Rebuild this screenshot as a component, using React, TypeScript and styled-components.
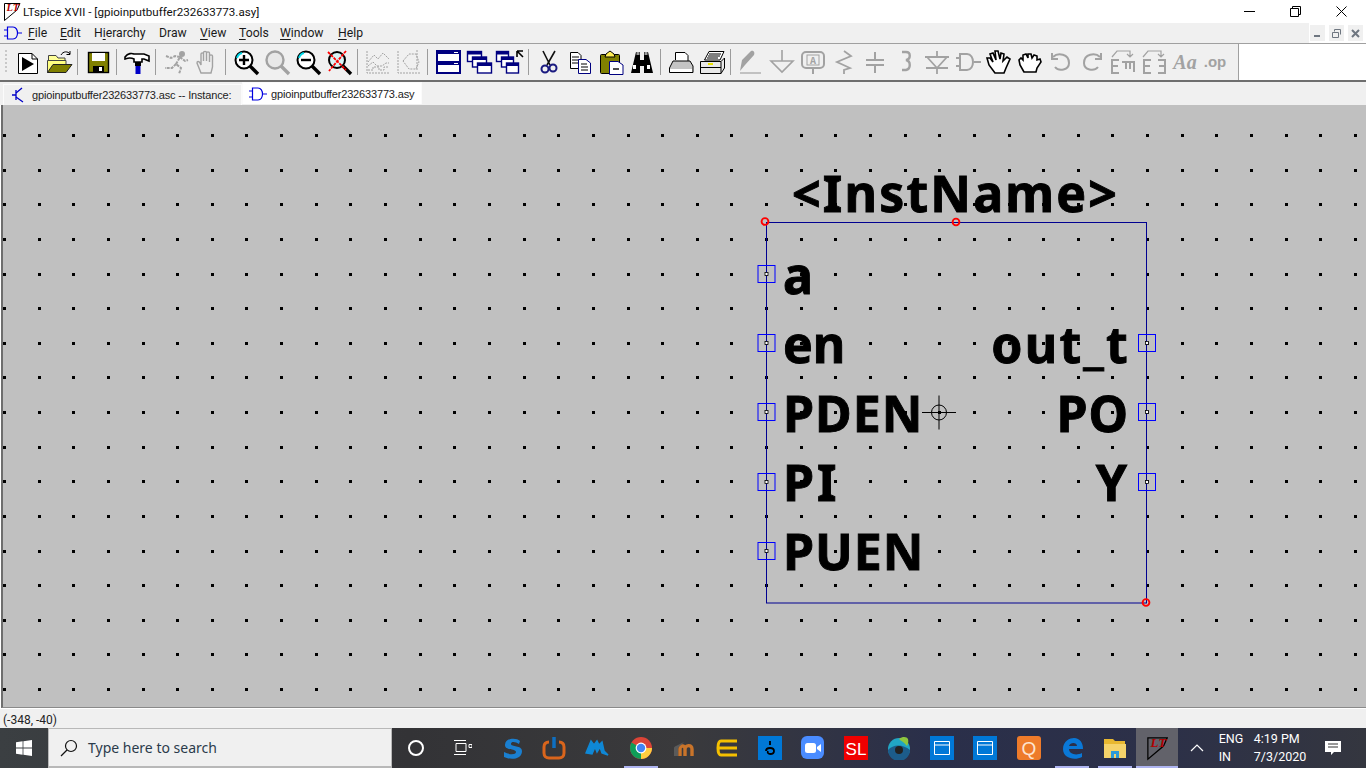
import React from "react";
import styled, { createGlobalStyle } from "styled-components";

const Global = createGlobalStyle`
  html, body { margin: 0; padding: 0; background: #fff; overflow: hidden; }
  * { box-sizing: border-box; }
`;
const UI = `Roboto, "Noto Sans", sans-serif`;

const Shell = styled.div`
  width: 1366px; height: 768px; display: flex; flex-direction: column; font-family: ${UI}; color: #000; overflow: hidden;
`;
const TitleBar = styled.div`
  height: 23px; flex: none; background: #fff; display: flex; align-items: center; padding: 0 2px 0 3px; font-size: 11.6px;
`;
const TitleText = styled.span`
  margin-left: 2px; flex: 1; white-space: nowrap; color: #111;
`;
const WinBtn = styled.div`
  width: 46px; height: 23px; display: flex; align-items: center; justify-content: center;
`;
const MenuBar = styled.div`
  height: 21px; flex: none; background: #f0f0f0; border-bottom: 1px solid #a0a0a0; display: flex; align-items: center; padding-left: 4px; position: relative;
`;
const MenuItem = styled.span<{ $w: number }>`
  width: ${p => p.$w}px; font-size: 12.2px; white-space: nowrap; color: #1a1a1a; display: flex; align-items: center;
  u { text-underline-offset: 2px; }
`;
const MdiBox = styled.div`
  margin-left: auto; align-self: stretch; width: 57px; background: #fff; display: flex; gap: 2px; padding: 1px 1px 0 0;
`;
const MdiBtn = styled.div`
  width: 17px; height: 18px; background: #f0f0f0; border: 1px solid #fff; display: flex; align-items: center; justify-content: center;
`;
const ToolRow = styled.div`
  height: 38px; flex: none; display: flex; background: #fff; border-bottom: 2px solid #6e6e6e;
`;
const Toolbar = styled.div`
  width: 1239px; background: #f0f0f0; border-right: 1px solid #a0a0a0; display: flex; align-items: center; padding-left: 12px; position: relative;
  &::before { content: ""; position: absolute; left: 5px; top: 6px; bottom: 6px; width: 2px;
    background: repeating-linear-gradient(to bottom, #c8c8c8 0 2px, transparent 2px 4px); }
`;
const ToolBtn = styled.div`
  width: 31px; height: 28px; flex: none; display: flex; align-items: center; justify-content: center;
  svg { display: block; overflow: visible; }
`;
const Sep = styled.div`
  width: 8px; height: 26px; flex: none; position: relative;
  &::after { content: ""; position: absolute; left: 3px; top: 0; bottom: 0; width: 1px; background: #9c9c9c; }
`;
const TabBar = styled.div`
  height: 23px; flex: none; background: #f0f0f0; display: flex; align-items: flex-end; padding-left: 3px; font-family: "Liberation Sans", Arial, sans-serif; font-size: 11px; letter-spacing: -0.16px;
`;
const Tab = styled.div<{ $active?: boolean; $w: number }>`
  width: ${p => p.$w}px; height: ${p => (p.$active ? 22 : 21)}px; background: ${p => (p.$active ? "#fff" : "#f0f0f0")};
  border: 1px solid #fbfbfb; border-bottom: none; display: flex; align-items: center; padding-left: ${p => (p.$active ? 6 : 8)}px; gap: ${p => (p.$active ? 4 : 8)}px; white-space: nowrap; color: #222;
  position: relative; top: ${p => (p.$active ? -1 : 0)}px;
`;
const Canvas = styled.div`
  height: 603px; flex: none; background: #c0c0c0; position: relative; border-left: 2px solid #6e6e6e; border-bottom: 1px solid #8a8a8a; margin-left: 1px;
  svg { position: absolute; left: -3px; top: 0; }
`;
const Label = styled.span<{ $x?: number; $right?: number; $base: number; $sp?: number }>`
  position: absolute; font: 700 50px/50px "Noto Sans", "Open Sans", sans-serif; color: #000; white-space: nowrap;
  -webkit-text-stroke: 0.9px #000;
  top: ${p => p.$base - 105 - 44}px;
  ${p => (p.$x !== undefined ? `left: ${p.$x - 3}px;` : `right: ${1366 - (p.$right as number)}px;`)}
  letter-spacing: ${p => p.$sp ?? 0}px;
`;
const StatusBar = styled.div`
  height: 20px; flex: none; background: #f0f0f0; border-top: 1px solid #fff; display: flex; align-items: center; padding: 3px 0 0 3px; font-size: 12px; color: #222;
`;
const Taskbar = styled.div`
  height: 40px; flex: none; display: flex; align-items: stretch; color: #fff;
  background: linear-gradient(to right, #3b3f42 0%, #333336 30%, #3a3a3c 50%, #2a2f4a 68%, #2c3048 85%, #34363f 100%);
`;
const StartBtn = styled.div`
  width: 48px; display: flex; align-items: center; justify-content: center;
`;
const SearchBox = styled.div`
  width: 344px; background: #f0f0f0; border: 1px solid #b8b8b8; border-bottom-width: 2px; display: flex; align-items: center; padding-left: 11px; gap: 10px;
  font-family: "Noto Sans", sans-serif; font-size: 14px; color: #2b3b4b;
`;
const TaskIcon = styled.div<{ $w: number; $on?: boolean; $under?: number }>`
  width: ${p => p.$w}px; flex: none; display: flex; align-items: center; justify-content: center; position: relative;
  background: ${p => (p.$on ? "#62626a" : "transparent")};
  ${p => p.$under ? `&::after { content: ""; position: absolute; left: ${(p.$w - p.$under) / 2}px; width: ${p.$under}px; bottom: 0; height: 2px; background: #aeb4f0; }` : ""}
`;
const TaskGap = styled.div`
  width: 6px; flex: none;
`;
const Tray = styled.div`
  display: flex; flex-direction: column; align-items: center; justify-content: center; font-size: 12.5px; line-height: 18px; flex: none; white-space: nowrap;
`;

const G = "#a2a2a2";
type S = { w?: number; children: React.ReactNode };
const Ico = ({ children, w = 28 }: S) => <svg width={w} height={28} viewBox={`0 0 ${w} 28`}>{children}</svg>;

const icons: Record<string, React.ReactNode> = {
  run: <Ico><path d="M4.5 5.5H18L23.5 11V25.5H4.5Z" fill="#fff" stroke="#000" /><path d="M18 5.5V11H23.5" fill="none" stroke="#000" /><path d="M8 9L20 16L8 23Z" fill="#000" /></Ico>,
  open: <Ico><path d="M3.5 12V7.5H11L13 10H20V13" fill="#ffff99" stroke="#444" /><path d="M2.5 24.5V12.5H21V22Z" fill="#ffff80" stroke="#444" /><path d="M2.5 24.5L8 16.5H27L21 24.5Z" fill="#808000" stroke="#222" /><path d="M16 7C18 3 23 3 25 6M25 3V6.5H21.5" fill="none" stroke="#000" /></Ico>,
  save: <Ico><rect x="4.5" y="4.5" width="20" height="20" fill="#808000" stroke="#000" strokeWidth="1.4" /><rect x="8" y="5" width="13" height="8" fill="#fff" /><rect x="9" y="18" width="11" height="6" fill="#000" /><rect x="15" y="19" width="3" height="4" fill="#fff" /></Ico>,
  hammer: <Ico><path d="M2 9C5 5 9 5 11 6H21L26 8V13L21 11H19V14H11V11C7 9 5 10 2 11Z" fill="#fff" stroke="#000" strokeWidth="1.6" /><rect x="12" y="14" width="6" height="4" fill="#000" /><rect x="12.5" y="18" width="5" height="8" fill="#0000c8" /></Ico>,
  man: <Ico><g fill="none" stroke={G} strokeWidth="2"><circle cx="20" cy="6" r="2" fill={G} /><path d="M4 8L9 10L13 8L18 9L14 16L19 20L17 26M14 16L10 20L3 20M18 9L23 13L26 12" strokeDasharray="3 1" /></g></Ico>,
  hand: <Ico><path d="M8 25L4 15C4 13 6 13 7 15L8 17V6C8 4.5 10.5 4.5 10.5 6V13V4.5C10.5 3 13.5 3 13.5 4.5V13V5C13.5 3.5 16.5 3.5 16.5 5V14V8C16.5 6.5 19.5 6.5 19.5 8V19L18 25Z" fill="#eee" stroke={G} strokeWidth="1.4" /></Ico>,
  zin: <Ico><circle cx="12" cy="12" r="8.5" fill="#fff" stroke="#000" strokeWidth="2" /><path d="M5 10A7 7 0 0 1 10 5" stroke="#00d8e8" fill="none" strokeWidth="2" /><path d="M7 12H17M12 7V17" stroke="#000" strokeWidth="2.4" /><path d="M18 18L26 26" stroke="#000" strokeWidth="3.4" /></Ico>,
  zfit: <Ico><circle cx="12" cy="12" r="8.5" fill="#e8e8e8" stroke={G} strokeWidth="2.4" /><path d="M18 18L26 26" stroke={G} strokeWidth="3.4" /></Ico>,
  zout: <Ico><circle cx="12" cy="12" r="8.5" fill="#fff" stroke="#000" strokeWidth="2" /><path d="M5 10A7 7 0 0 1 10 5" stroke="#00d8e8" fill="none" strokeWidth="2" /><path d="M7 12H17" stroke="#000" strokeWidth="2.4" /><path d="M18 18L26 26" stroke="#000" strokeWidth="3.4" /></Ico>,
  zx: <Ico><circle cx="12" cy="12" r="8" fill="#d8f4f6" stroke="#000" strokeWidth="2" /><path d="M18 18L26 26" stroke="#000" strokeWidth="3.4" /><path d="M3 4L21 22M21 3L4 23" stroke="#f00" strokeWidth="1.8" strokeDasharray="3 1" /></Ico>,
  chart: <Ico><g fill="none" stroke={G} strokeDasharray="2 1"><path d="M3 3V25H26" /><path d="M4 14L10 7L14 11L19 5L25 11" /><path d="M4 18L9 14L13 18H18L22 15H25" /><path d="M4 22H9V19H15V22H20V19H25" /></g></Ico>,
  fft: <Ico><g fill="none" stroke={G} strokeDasharray="2 1"><path d="M3 3V25H26" /><path d="M8 13L14 6H21L24 14L21 21H14Z" /><path d="M22 2V22" /></g></Ico>,
  tile: <Ico><g stroke="#000080" strokeWidth="2" fill="#fff"><rect x="3" y="3" width="23" height="11" /><rect x="3" y="14" width="23" height="11" /></g><rect x="3" y="3" width="23" height="3" fill="#000080" /><rect x="3" y="14" width="23" height="3" fill="#000080" /><rect x="20" y="4" width="4" height="1" fill="#fff" /><rect x="20" y="15" width="4" height="1" fill="#fff" /></Ico>,
  casc: <Ico><g stroke="#000080" strokeWidth="1.4" fill="#fff"><rect x="2.5" y="3.5" width="14" height="10" /><rect x="7.5" y="9" width="14" height="10" /><rect x="12.5" y="15" width="14" height="10" /></g><g fill="#000080"><rect x="2.5" y="3.5" width="14" height="3" /><rect x="7.5" y="9" width="14" height="3" /><rect x="12.5" y="15" width="14" height="3" /></g></Ico>,
  arr: <Ico><g stroke="#000080" strokeWidth="1.4" fill="#fff"><rect x="0.5" y="3.5" width="12" height="10" /><rect x="5.5" y="9" width="12" height="10" /><rect x="10.5" y="15" width="12" height="10" /></g><g fill="#000080"><rect x="0.5" y="3.5" width="12" height="3" /><rect x="5.5" y="9" width="12" height="3" /><rect x="10.5" y="15" width="12" height="3" /></g><path d="M21 3V9M21 3H27M21 3L27 9" stroke="#000" strokeWidth="1.6" fill="none" /></Ico>,
  cut: <Ico><path d="M8 3L15 17M20 3L12 17" stroke="#111" strokeWidth="1.6" fill="none" /><circle cx="10" cy="21" r="3.5" fill="none" stroke="#1a1a80" strokeWidth="2" /><circle cx="18" cy="20" r="3.5" fill="none" stroke="#1a1a80" strokeWidth="2" /></Ico>,
  copy: <Ico><path d="M4.5 4.5H12L15 7.5V20.5H4.5Z" fill="#fff" stroke="#000" /><path d="M6 9H13M6 12H13M6 15H13" stroke="#000" /><path d="M12.5 11.5H20L24.5 15V25.5H12.5Z" fill="#fff" stroke="#000080" /><path d="M15 16H21M15 19H22M15 22H22" stroke="#000" /></Ico>,
  paste: <Ico><rect x="3.5" y="6.5" width="19" height="19" rx="1" fill="#808000" stroke="#000" /><path d="M9 6L13 3L17 6L18 9H8Z" fill="#ffee55" stroke="#000" /><path d="M12.5 13.5H21L26 17V26.5H12.5Z" fill="#fff" stroke="#000080" /><path d="M16 21H22" stroke="#000" strokeWidth="1.4" /></Ico>,
  bino: <Ico><path d="M8 4H12V12H16V4H20L25 25H16V18H12V25H3Z" fill="#000" /><rect x="8.5" y="4" width="3" height="3" fill="#9a9a9a" /><rect x="16.5" y="4" width="3" height="3" fill="#9a9a9a" /><rect x="5" y="17" width="3" height="4" fill="#fff" /><rect x="19" y="17" width="3" height="4" fill="#fff" /></Ico>,
  prn: <Ico><path d="M8.5 12V4.5H18L21 7.5V14" fill="#fff" stroke="#000" /><path d="M2.5 20L6 13H23L26 18V24.5H2.5Z" fill="#c4c4c4" stroke="#000" /><rect x="3" y="21" width="22" height="3" fill="#fff" /></Ico>,
  prn2: <Ico><path d="M6.5 12L11 3.5H26L22 12Z" fill="#fff" stroke="#000" /><path d="M11 6H23M10 8H22M9 10H20" stroke="#000" /><path d="M2.5 13.5H23L26.5 10V20L23 25.5H2.5Z" fill="#e8e8e8" stroke="#000" /><path d="M2.5 19.5H23M23 13.5V25.5" stroke="#000" /><rect x="10" y="15" width="5" height="2" fill="#e8e000" /></Ico>,
  pen: <Ico><path d="M3 23L5 12L14 3C17 2 18 5 17 7L8 17Z" fill={G} /><path d="M3 25H24" stroke={G} strokeWidth="1.2" /></Ico>,
  gnd: <Ico><path d="M14 2V13M3 13H25L14 24Z" fill="none" stroke={G} strokeWidth="1.6" /></Ico>,
  lbl: <Ico><path d="M14 20V26" stroke={G} strokeWidth="2" /><rect x="3" y="4" width="22" height="16" rx="4" fill="none" stroke={G} strokeWidth="2" /><rect x="8" y="7" width="12" height="10" fill="none" stroke={G} /><text x="14" y="16" textAnchor="middle" fontSize="10" fontWeight="700" fontFamily="Liberation Mono, monospace" fill={G}>A</text></Ico>,
  res: <Ico><path d="M14 3L21 8L7 14L20 20L14 22V26" fill="none" stroke={G} strokeWidth="1.8" /></Ico>,
  cap: <Ico><path d="M14 4V12M5 12H23M5 17H23M14 17V25" fill="none" stroke={G} strokeWidth="2" /></Ico>,
  ind: <Ico><path d="M10 4H14C19 4 19 11 14 12C19 13 19 21 14 22H10" fill="none" stroke={G} strokeWidth="2.4" /></Ico>,
  dio: <Ico><path d="M14 3V9M2 9H26M3 20H25M14 20V26M4 9L14 20L24 9" fill="none" stroke={G} strokeWidth="1.8" /></Ico>,
  comp: <Ico><path d="M2 10H7M2 18H7M6 6V22H13C21 22 21 6 13 6ZM20 14H27" fill="none" stroke={G} strokeWidth="2" /></Ico>,
  hand1: <Ico><path d="M10 25L4 17L2 10L5 10L8 14L5 6L8 5L11 12L10 3L13 3L15 11L16 5L19 6L18 13L22 9L25 11L21 20L19 25Z" fill="#fff" stroke="#000" strokeWidth="1.6" /></Ico>,
  hand2: <Ico><path d="M8 24L4 17L3 12L5 10L7 12V7L10 6L12 10V6L15 6L16 10L18 7L21 8V12L24 11L25 14L21 20L20 24Z" fill="#fff" stroke="#000" strokeWidth="1.6" /></Ico>,
  undo: <Ico><path d="M6 9C11 4 22 6 22 15C22 22 12 24 8 19" fill="none" stroke={G} strokeWidth="2" /><path d="M5 5V11H11" fill="none" stroke={G} strokeWidth="2" /></Ico>,
  redo: <Ico><path d="M22 9C17 4 6 6 6 15C6 22 16 24 20 19" fill="none" stroke={G} strokeWidth="2" /><path d="M23 5V11H17" fill="none" stroke={G} strokeWidth="2" /></Ico>,
  rot: <Ico><path d="M3 9L8 3H21V8M18 6L21 9L24 6" fill="none" stroke={G} strokeWidth="1.2" /><path d="M10 12H3V25H10M3 18H9M13 14H25V24M17 14V21M21 14V21" fill="none" stroke={G} strokeWidth="2" /></Ico>,
  mir: <Ico><path d="M3 9L8 3H21V8M18 6L21 9L24 6" fill="none" stroke={G} strokeWidth="1.2" /><path d="M11 12H4V25H11M4 18H10M18 12H25V25H18M19 18H25" fill="none" stroke={G} strokeWidth="2" /></Ico>,
  text: <Ico><text x="14" y="21" textAnchor="middle" fontSize="20" fontWeight="700" fontStyle="italic" fontFamily="Liberation Serif, serif" fill={G}>Aa</text></Ico>,
  op: <Ico><text x="13" y="19" textAnchor="middle" fontSize="15" fontWeight="700" fontFamily="Liberation Sans, sans-serif" fill={G}>.op</text></Ico>,
};

const groups = [
  ["run", "open"], ["save"], ["hammer"], ["man", "hand"], ["zin", "zfit", "zout", "zx"], ["chart", "fft"], ["tile", "casc", "arr"],
  ["cut", "copy", "paste", "bino"], ["prn", "prn2"],
  ["pen", "gnd", "lbl", "res", "cap", "ind", "dio", "comp", "hand1", "hand2", "undo", "redo", "rot", "mir", "text", "op"],
];

const Logo = ({ s = 1 }: { s?: number }) => (
  <svg width={18 * s} height={20 * s} viewBox="0 0 18 20">
    <path d="M1.5 1.5H17L14 8L1.5 18.5Z" fill="none" stroke="#000" strokeWidth="1" />
    <text x="3.5" y="9" fontSize="10.5" fontWeight="700" fontStyle="italic" fontFamily="Liberation Serif, serif" fill="#b00000">LT</text>
  </svg>
);

const Comp = ({ c = "#0000e0" }: { c?: string }) => (
  <svg width="18" height="14" viewBox="0 0 18 14"><path d="M0 4H4M0 10H4M3.5 1V13H9C15 13 15 1 9 1H3.5ZM13 7H18" fill="none" stroke={c} strokeWidth="1.2" /></svg>
);

const dots: [number, number][] = [];
for (let i = 0; i < 40; i++) for (let j = 0; j < 17; j++) dots.push([Math.round(4 + 34.64 * i), Math.round(30 + 34.63 * j)]);

const leftPins = [274, 343, 412, 482, 551];
const rightPins = [343, 412, 482];

const Schematic = () => (
  <svg width="1366" height="603" viewBox="0 0 1366 603">
    {dots.map(([x, y]) => <rect key={`${x}-${y}`} x={x - 1} y={y - 1} width="3" height="3" fill="#000" />)}
    <rect x="766.5" y="117.5" width="380" height="380.5" fill="none" stroke="#000090" />
    {leftPins.map(y => <g key={y}><rect x="758" y={y - 105 - 8.5} width="17" height="17" fill="none" stroke="#0000ff" /><rect x="765" y={y - 105 - 1.5} width="3" height="3" fill="#fff" stroke="#000" strokeWidth="0.8" /></g>)}
    {rightPins.map(y => <g key={y}><rect x="1138.5" y={y - 105 - 8.5} width="17" height="17" fill="none" stroke="#0000ff" /><rect x="1145.5" y={y - 105 - 1.5} width="3" height="3" fill="#fff" stroke="#000" strokeWidth="0.8" /></g>)}
    {[[765, 116.5], [956, 117], [1146, 497.5]].map(([x, y]) => <circle key={x} cx={x} cy={y} r="3.4" fill="none" stroke="#f00" strokeWidth="1.9" />)}
    <g fill="none" stroke="#000"><circle cx="939" cy="307.5" r="7.5" /><path d="M922 307.5H956M939 290.5V324.5" /></g>
  </svg>
);

const Win = () => (
  <svg width="16" height="16" viewBox="0 0 16 16" fill="#fff"><path d="M0 2.2L6.6 1.3V7.6H0ZM7.4 1.2L16 0V7.6H7.4ZM0 8.4H6.6V14.7L0 13.8ZM7.4 8.4H16V16L7.4 14.8Z" /></svg>
);
const Square = ({ bg, children }: { bg: string; children: React.ReactNode }) => (
  <svg width="24" height="24" viewBox="0 0 24 24"><rect width="24" height="24" fill={bg} />{children}</svg>
);
const WindowGlyph = () => <Square bg="#0078d7"><path d="M4.5 5.5H19.5V18.5H4.5ZM4.5 9H19.5" fill="none" stroke="#fff" /></Square>;

const taskIcons: { w: number; under?: number; on?: boolean; el: React.ReactNode }[] = [
  { w: 40, el: <svg width="24" height="24" viewBox="0 0 24 24"><path d="M20 5C16 1 5 2 5 9C5 15 16 12 16 16C16 19 9 19 4 16L4 21C10 24 22 24 22 15C22 9 11 11 11 8C11 5 16 6 19 8Z" fill="#1a7fd0" /></svg> },
  { w: 43, el: <svg width="24" height="24" viewBox="0 0 24 24"><path d="M7 6C3 6 2 8 2 11V17C2 20 4 22 7 22H17C20 22 22 20 22 17V11C22 8 21 6 17 6" fill="none" stroke="#d9651c" strokeWidth="3" /><path d="M12 1V12" stroke="#0f6fc0" strokeWidth="3.5" /></svg> },
  { w: 44, el: <svg width="24" height="24" viewBox="0 0 24 24"><path d="M1 17L6 5L9 9L12 5L14 9L17 6L19 15L23 19L17 17L15 11L12 16L10 11L7 18Z" fill="#0f88d6" stroke="#0f88d6" strokeWidth="1.5" /></svg> },
  { w: 43, under: 34, el: <svg width="24" height="24" viewBox="0 0 24 24"><circle cx="12" cy="12" r="11" fill="#db4437" /><path d="M12 12L2.5 6.5A11 11 0 0 0 12 23Z" fill="#0f9d58" /><path d="M12 12H23A11 11 0 0 1 12 23Z" fill="#ffcd40" /><circle cx="12" cy="12" r="5.4" fill="#fff" /><circle cx="12" cy="12" r="4.2" fill="#4285f4" /></svg> },
  { w: 43, el: <svg width="24" height="24" viewBox="0 0 24 24"><path d="M8 20V13C8 9 13 9 13 13V20M13 13C13 9 20 8 20 13V20" fill="none" stroke="#c9742a" strokeWidth="3.4" /><path d="M2 20V12C2 11 3 10 4 10L12 6L6 12V20" fill="#5a5a5a" /></svg> },
  { w: 44, el: <svg width="24" height="24" viewBox="0 0 24 24"><path d="M22 5H6C2 5 2 19 6 19H22M3 12H22" fill="none" stroke="#f5c000" strokeWidth="3" /></svg> },
  { w: 42, el: <Square bg="#0078d7"><path d="M12 5V9M8 15C8 11 16 11 16 15C16 19 8 19 10 15" fill="none" stroke="#000" strokeWidth="1.8" /></Square> },
  { w: 43, el: <svg width="24" height="24" viewBox="0 0 24 24"><rect width="23" height="23" rx="6" fill="#4a8cff" /><rect x="4" y="7" width="11" height="10" rx="2.5" fill="#fff" /><path d="M16 11L20 8V16L16 13Z" fill="#fff" /></svg> },
  { w: 43, el: <Square bg="#f00000"><text x="12" y="19" textAnchor="middle" fontSize="17" fontFamily="Liberation Sans, sans-serif" fill="#fff">SL</text></Square> },
  { w: 43, el: <svg width="24" height="24" viewBox="0 0 24 24"><circle cx="12" cy="13" r="11" fill="#21a6c4" /><path d="M1 14C6 8 16 8 23 14A11 11 0 0 1 1 14Z" fill="#1c5c8a" /><circle cx="12" cy="14" r="4" fill="#222" /><path d="M12 3C16 0 20 1 21 3C22 7 20 10 20 10C17 6 14 5 12 3Z" fill="#8dc63f" /></svg> },
  { w: 43, el: <WindowGlyph /> },
  { w: 44, el: <WindowGlyph /> },
  { w: 43, el: <svg width="24" height="24" viewBox="0 0 24 24"><rect width="24" height="24" rx="3" fill="#ee7b2a" /><text x="12" y="19" textAnchor="middle" fontSize="19" fontFamily="Liberation Sans, sans-serif" fill="#fde3d0">Q</text></svg> },
  { w: 43, under: 34, el: <svg width="24" height="24" viewBox="0 0 24 24"><path d="M3 13C3 5 10 2 14 2C20 2 23 7 23 13H9C9 18 16 20 22 17V21C14 25 3 22 3 13ZM9 10H17C17 6 10 6 9 10Z" fill="#0a78d7" /></svg> },
  { w: 43, under: 34, el: <svg width="24" height="24" viewBox="0 0 24 24"><path d="M1 3H10L12 5H22V21H1Z" fill="#e8b830" /><path d="M1 8H23V22H1Z" fill="#f5d36a" /><path d="M8 22V15H16V22H13V18H11V22Z" fill="#2e9ad8" /></svg> },
  { w: 42, on: true, under: 42, el: <Logo s={1.25} /> },
];

const App = () => (
  <Shell>
    <Global />
    <TitleBar>
      <Logo />
      <TitleText>LTspice XVII - [gpioinputbuffer232633773.asy]</TitleText>
      <WinBtn><svg width="11" height="2"><rect width="11" height="1" fill="#000" /></svg></WinBtn>
      <WinBtn><svg width="11" height="11" viewBox="0 0 11 11" fill="none" stroke="#000"><path d="M.5 2.5H8.5V10.5H.5ZM2.5 2.5V.5H10.5V8.5H8.5" /></svg></WinBtn>
      <WinBtn><svg width="11" height="11" viewBox="0 0 11 11" stroke="#000"><path d="M.5 .5L10.5 10.5M10.5 .5L.5 10.5" /></svg></WinBtn>
    </TitleBar>
    <MenuBar>
      <MenuItem $w={24}><Comp /></MenuItem>
      <MenuItem $w={32}><span><u>F</u>ile</span></MenuItem>
      <MenuItem $w={34}><span><u>E</u>dit</span></MenuItem>
      <MenuItem $w={65}><span>H<u>i</u>erarchy</span></MenuItem>
      <MenuItem $w={41}><span>Draw</span></MenuItem>
      <MenuItem $w={39}><span><u>V</u>iew</span></MenuItem>
      <MenuItem $w={41}><span><u>T</u>ools</span></MenuItem>
      <MenuItem $w={58}><span><u>W</u>indow</span></MenuItem>
      <MenuItem $w={34}><span><u>H</u>elp</span></MenuItem>
      <MdiBox>
        <MdiBtn><svg width="9" height="9" viewBox="0 0 9 9"><rect x="1" y="6" width="6" height="2" fill="#6e7680" /></svg></MdiBtn>
        <MdiBtn><svg width="9" height="9" viewBox="0 0 9 9" fill="none" stroke="#6e7680"><path d="M.5 3.5H6.5V8.5H.5ZM2.5 2.5V.5H8.5V5.5" /></svg></MdiBtn>
        <MdiBtn><svg width="9" height="9" viewBox="0 0 9 9" stroke="#6e7680" strokeWidth="2"><path d="M1 1L8 8M8 1L1 8" /></svg></MdiBtn>
      </MdiBox>
    </MenuBar>
    <ToolRow>
      <Toolbar>
        {groups.map((g, i) => (
          <React.Fragment key={i}>
            {i > 0 && <Sep />}
            {g.map(k => <ToolBtn key={k}>{icons[k]}</ToolBtn>)}
          </React.Fragment>
        ))}
      </Toolbar>
    </ToolRow>
    <TabBar>
      <Tab $w={239}>
        <svg width="12" height="16" viewBox="0 0 12 16" fill="none" stroke="#0000c8" strokeWidth="1.3"><path d="M0 8H4M4 3V13" /><path d="M4 6L10 1M4 10L11 15" /></svg>
        gpioinputbuffer232633773.asc -- Instance:
      </Tab>
      <Tab $w={180} $active>
        <Comp />
        gpioinputbuffer232633773.asy
      </Tab>
    </TabBar>
    <Canvas>
      <Schematic />
      <Label $x={792} $base={212} $sp={2.2}>&lt;InstName&gt;</Label>
      <Label $x={783} $base={294}>a</Label>
      <Label $x={783} $base={363}>en</Label>
      <Label $x={783} $base={432} $sp={1}>PDEN</Label>
      <Label $x={783} $base={501} $sp={3}>PI</Label>
      <Label $x={783} $base={570} $sp={1}>PUEN</Label>
      <Label $right={1130} $base={363} $sp={2.2}>out_t</Label>
      <Label $right={1129} $base={432} $sp={1}>PO</Label>
      <Label $right={1128} $base={501} $sp={1}>Y</Label>
    </Canvas>
    <StatusBar>(-348, -40)</StatusBar>
    <Taskbar>
      <StartBtn><Win /></StartBtn>
      <SearchBox>
        <svg width="18" height="18" viewBox="0 0 18 18" fill="none" stroke="#111" strokeWidth="1.2"><circle cx="11" cy="7" r="5.5" /><path d="M7 11L1 17" /></svg>
        Type here to search
      </SearchBox>
      <TaskIcon $w={48}><svg width="18" height="18" viewBox="0 0 18 18"><circle cx="9" cy="9" r="7" fill="none" stroke="#fff" strokeWidth="2" /></svg></TaskIcon>
      <TaskIcon $w={46}><svg width="18" height="16" viewBox="0 0 18 16" fill="none" stroke="#fff"><path d="M0 .5H12M2 3.5H12V11.5H2V3.5ZM0 14.5H12M15 4.5H18V7.5H15Z" /></svg></TaskIcon>
      <TaskGap />
      {taskIcons.map((t, i) => <TaskIcon key={i} $w={t.w} $on={t.on} $under={t.under}>{t.el}</TaskIcon>)}
      <TaskIcon $w={38}><svg width="14" height="8" viewBox="0 0 14 8" fill="none" stroke="#fff" strokeWidth="1.2"><path d="M1 7L7 1L13 7" /></svg></TaskIcon>
      <TaskIcon $w={30}><Tray>ENG<br />IN</Tray></TaskIcon>
      <TaskIcon $w={68}><Tray>4:19 PM<br />7/3/2020</Tray></TaskIcon>
      <TaskIcon $w={38}><svg width="16" height="16" viewBox="0 0 16 16"><path d="M0 1H16V12H9L6 15V12H0Z" fill="#fff" /><path d="M3 4H13M3 7H13" stroke="#333" /></svg></TaskIcon>
    </Taskbar>
  </Shell>
);
export default App;
